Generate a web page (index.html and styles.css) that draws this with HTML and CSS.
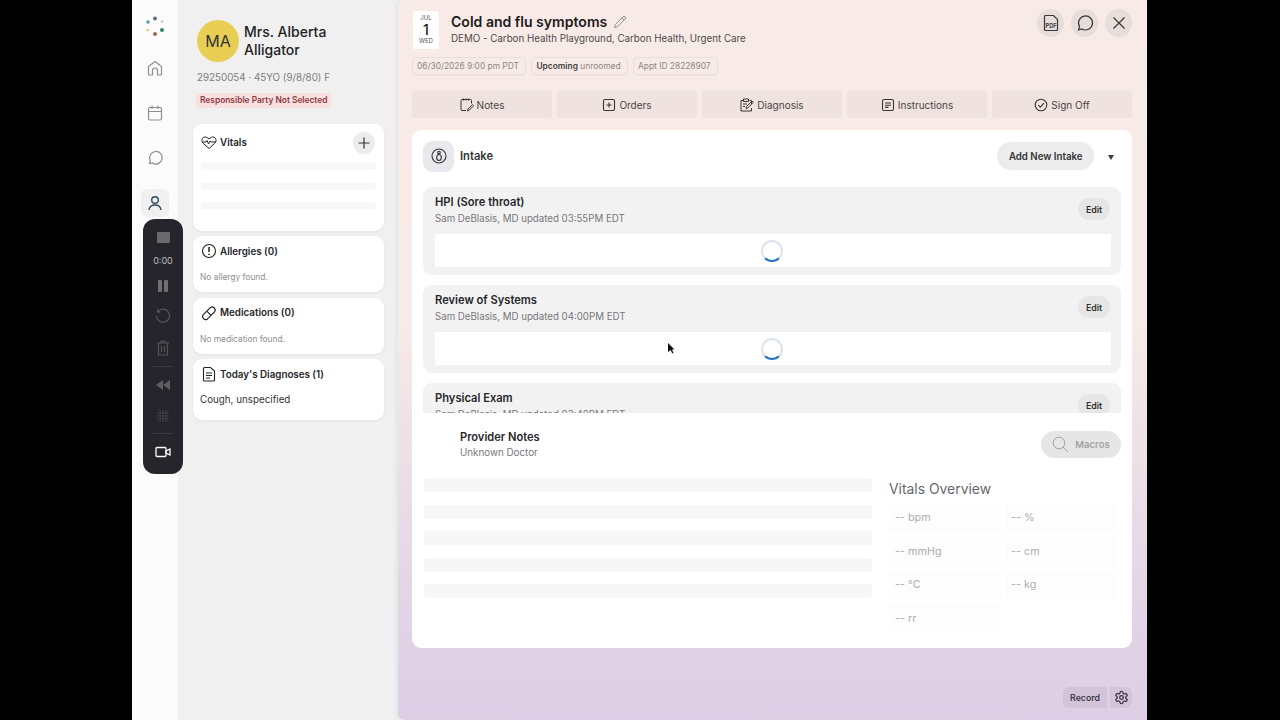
FILE: index.html
```html
<!DOCTYPE html>
<html lang="en">
<head>
    <meta charset="UTF-8">
    <title>Cold and flu symptoms</title>
    <link rel="stylesheet" href="styles.css">
</head>
<body>
<div class="app">
    <!-- left rail -->
    <nav class="rail">
        <svg class="logo" width="22" height="22" viewBox="0 0 22 22">
            <circle cx="11" cy="2.5" r="2" fill="#5d7186"/>
            <circle cx="18" cy="5.5" r="1.3" fill="#a9cfd0"/>
            <circle cx="4" cy="6" r="1.7" fill="#4f9a94"/>
            <circle cx="3.5" cy="14" r="1.3" fill="#e9cf62"/>
            <circle cx="18" cy="14" r="2" fill="#2f8177"/>
            <circle cx="11" cy="18" r="2" fill="#a5693f"/>
        </svg>
        <a class="rail-item">
            <svg width="18" height="18" viewBox="0 0 18 18" fill="none" stroke="#8b8f93" stroke-width="1.2"><path d="M2.5 7.5 9 2.5l6.5 5V15a1 1 0 0 1-1 1H11.5v-4.5a2.5 2.5 0 0 0-5 0V16H3.5a1 1 0 0 1-1-1z"/></svg>
        </a>
        <a class="rail-item">
            <svg width="18" height="18" viewBox="0 0 18 18" fill="none" stroke="#8b8f93" stroke-width="1.2"><rect x="2.5" y="3.5" width="13" height="12.5" rx="1.5"/><path d="M2.5 7.5h13M6 1.5v3.5M12 1.5v3.5"/></svg>
        </a>
        <a class="rail-item">
            <svg width="18" height="18" viewBox="0 0 18 18" fill="none" stroke="#8b8f93" stroke-width="1.2"><path d="M3.5 15.500l.8-3A6.3 6.3 0 1 1 6.500 15z" transform="translate(0 -1)"/></svg>
        </a>
        <a class="rail-item active">
            <svg width="18" height="18" viewBox="0 0 18 18" fill="none" stroke="#2d4a5e" stroke-width="1.4"><circle cx="9" cy="6" r="3.3"/><path d="M3 16c.4-3.4 2.8-5 6-5s5.600 1.600 6 5"/></svg>
        </a>
    </nav>

    <!-- recorder overlay -->
    <div class="recorder">
        <span class="rec-stop"></span>
        <span class="rec-time">0:00</span>
        <svg width="14" height="14" viewBox="0 0 14 14" fill="#6f7073"><rect x="2" y="1" width="4" height="12" rx="1"/><rect x="8" y="1" width="4" height="12" rx="1"/></svg>
        <svg width="16" height="16" viewBox="0 0 16 16" fill="none" stroke="#55565a" stroke-width="1.2"><path d="M3 3.500A6.500 6.500 0 1 1 1.500 8M2.500 1.500v2.500H5"/></svg>
        <svg width="14" height="16" viewBox="0 0 14 16" fill="none" stroke="#55565a" stroke-width="1.2"><path d="M1 3h12M5 3V1h4v2M2.500 3v12h9V3M5.500 6v6M8.500 6v6"/></svg>
        <span class="rec-line"></span>
        <svg class="rec-rewind" width="14" height="10" viewBox="0 0 14 10" fill="#5f6064"><path d="M7 0v10L0 5zM14 0v10L7 5z"/></svg>
        <svg width="14" height="14" viewBox="0 0 14 14" fill="none" stroke="#4f5054" stroke-width="1" stroke-dasharray="1.500 1"><path d="M1 4h12M1 7h12M1 10h12M4 1v12M7 1v12M10 1v12"/></svg>
        <span class="rec-line"></span>
        <svg width="16" height="12" viewBox="0 0 16 12" fill="none" stroke="#fff" stroke-width="1.300"><rect x="1" y="1.500" width="10" height="9" rx="1"/><path d="M11 5l4-2v6l-4-2z"/></svg>
    </div>

    <!-- patient column -->
    <aside class="side">
        <div class="patient">
            <div class="avatar">MA</div>
            <div class="patient-name">Mrs. Alberta Alligator</div>
        </div>
        <div class="patient-meta">29250054 · 45YO (9/8/80) F</div>
        <div class="alert">Responsible Party Not Selected</div>

        <section class="panel vitals-panel">
            <div class="panel-head">
                <svg width="16" height="16" viewBox="0 0 16 16" fill="none" stroke="#222" stroke-width="1"><path d="M2.500 9.500C1 8 .8 6.800 1 5.500 1.400 3.500 3.800 2.300 5.500 3.300 6.500 3.800 7.500 4.500 8 5c.5-.5 1.500-1.200 2.500-1.700 1.700-1 4.100.2 4.500 2.200.2 1.300 0 2.500-1.500 4L8 14.500z"/><path d="M1 8h4l1-1.500L7.500 10 9 7l1 1h5"/></svg>
                <h3>Vitals</h3>
                <button class="round-add">
                    <svg width="12" height="12" viewBox="0 0 12 12" stroke="#333" stroke-width="1.200"><path d="M6 .5v11M.5 6h11"/></svg>
                </button>
            </div>
            <div class="skeleton side-bar"></div>
            <div class="skeleton side-bar"></div>
            <div class="skeleton side-bar"></div>
        </section>

        <section class="panel">
            <div class="panel-head">
                <svg width="16" height="16" viewBox="0 0 16 16" fill="none" stroke="#222" stroke-width="1.100"><circle cx="8" cy="8" r="6.500"/><path d="M8 4v5M8 10.800v1.200" stroke-width="1.500"/></svg>
                <h3>Allergies (0)</h3>
            </div>
            <p class="muted">No allergy found.</p>
        </section>

        <section class="panel">
            <div class="panel-head">
                <svg width="16" height="16" viewBox="0 0 16 16" fill="none" stroke="#222" stroke-width="1.200"><path d="M2.300 9.700l7-7a3 3 0 0 1 4.200 4.200l-7 7a3 3 0 0 1-4.200-4.200zM5.800 6.200l4.200 4.200"/></svg>
                <h3>Medications (0)</h3>
            </div>
            <p class="muted">No medication found.</p>
        </section>

        <section class="panel">
            <div class="panel-head">
                <svg width="16" height="16" viewBox="0 0 16 16" fill="none" stroke="#222" stroke-width="1.100"><path d="M2.500 2.500a1 1 0 0 1 1-1h6l4 3.500v9a1 1 0 0 1-1 1h-9a1 1 0 0 1-1-1zM5 7h6M5 9.500h6M5 12h4"/></svg>
                <h3>Today's Diagnoses (1)</h3>
            </div>
            <p class="diagnosis">Cough, unspecified</p>
        </section>
    </aside>

    <!-- main visit area -->
    <main class="visit">
        <header class="visit-head">
            <div class="date-tile">
                <span class="date-month">JUL</span>
                <span class="date-day">1</span>
                <span class="date-week">WED</span>
            </div>
            <div class="visit-title">
                <h1>Cold and flu symptoms
                    <svg width="14" height="14" viewBox="0 0 14 14" fill="none" stroke="#8d8a88" stroke-width="1"><path d="M1.500 12.500l.8-3L10 1.800a1.400 1.400 0 0 1 2.200 2.200L4.500 11.700zM9 3l2 2"/></svg>
                </h1>
                <p>DEMO - Carbon Health Playground, Carbon Health, Urgent Care</p>
            </div>
            <div class="head-actions">
                <button class="round-btn">
                    <svg width="16" height="18" viewBox="0 0 16 18" fill="none" stroke="#3a3635" stroke-width="1.200"><path d="M1.500 2.500a1 1 0 0 1 1-1h8l4 4v10a1 1 0 0 1-1 1h-11a1 1 0 0 1-1-1z"/><text x="8" y="13.500" text-anchor="middle" class="pdf-label">PDF</text></svg>
                </button>
                <button class="round-btn">
                    <svg width="18" height="18" viewBox="0 0 18 18" fill="none" stroke="#3a3635" stroke-width="1.200"><path d="M2.500 16l1-3.500A7 7 0 1 1 6 15z"/></svg>
                </button>
                <button class="round-btn">
                    <svg width="14" height="14" viewBox="0 0 14 14" stroke="#3a3635" stroke-width="1.200"><path d="M1.500 1.500l11 11M12.500 1.500l-11 11"/></svg>
                </button>
            </div>
        </header>

        <div class="chips">
            <span class="chip">06/30/2026 9:00 pm PDT</span>
            <span class="chip"><b>Upcoming</b> unroomed</span>
            <span class="chip">Appt ID 28228907</span>
        </div>

        <div class="tabs">
            <a class="tab">
                <svg width="14" height="14" viewBox="0 0 14 14" fill="none" stroke="#3a3635" stroke-width="1"><path d="M6 12.500H2a1 1 0 0 1-1-1v-9a1 1 0 0 1 1-1h8.500a1 1 0 0 1 1 1v3M3.500.5v2M6 .5v2M8.500.5v2M7.500 13l.5-2 4.500-4.500 1.200 1.200L9.200 12.200z"/></svg>
                Notes
            </a>
            <a class="tab">
                <svg width="14" height="14" viewBox="0 0 14 14" fill="none" stroke="#3a3635" stroke-width="1.100"><rect x="1.500" y="1.500" width="11" height="11" rx="1.500"/><path d="M7 4.500v5M4.500 7h5"/></svg>
                Orders
            </a>
            <a class="tab">
                <svg width="14" height="14" viewBox="0 0 14 14" fill="none" stroke="#3a3635" stroke-width="1"><path d="M11.500 6V2.500h-2M3 2.500H1v10.500h10.500V10M3.500 1h5v2.500h-5zM3 6h4M3 8.500h2M6 10.500l.5-2L12 3l1.300 1.300L7.800 10z"/></svg>
                Diagnosis
            </a>
            <a class="tab">
                <svg width="14" height="14" viewBox="0 0 14 14" fill="none" stroke="#3a3635" stroke-width="1.100"><rect x="1.500" y="1.500" width="11" height="11" rx="1.500"/><path d="M4 5h6M4 7.200h6M4 9.400h3.500"/></svg>
                Instructions
            </a>
            <a class="tab">
                <svg width="14" height="14" viewBox="0 0 14 14" fill="none" stroke="#3a3635" stroke-width="1.100"><circle cx="7" cy="7" r="5.800"/><path d="M4.300 7.200l2 2 3.600-4"/></svg>
                Sign Off
            </a>
        </div>

        <section class="sheet">
            <div class="intake-head">
                <span class="intake-icon">
                    <svg width="16" height="16" viewBox="0 0 16 16" fill="none" stroke="#333" stroke-width="1.100"><circle cx="8" cy="8" r="7"/><circle cx="8" cy="4.600" r="1.300"/><path d="M8 6.500c-1.600 0-2.300 1.200-2.300 3 0 1.700 1 3 2.300 3s2.300-1.300 2.300-3c0-1.800-.7-3-2.300-3z"/></svg>
                </span>
                <h2>Intake</h2>
                <button class="pill-btn">Add New Intake</button>
                <span class="caret"></span>
            </div>

            <div class="intake-list">
                <article class="note">
                    <div class="note-head">
                        <div>
                            <h4>HPI (Sore throat)</h4>
                            <p>Sam DeBlasis, MD updated 03:55PM EDT</p>
                        </div>
                        <button class="edit-btn">Edit</button>
                    </div>
                    <div class="note-body"><span class="spinner"></span></div>
                </article>
                <article class="note">
                    <div class="note-head">
                        <div>
                            <h4>Review of Systems</h4>
                            <p>Sam DeBlasis, MD updated 04:00PM EDT</p>
                        </div>
                        <button class="edit-btn">Edit</button>
                    </div>
                    <div class="note-body"><span class="spinner"></span></div>
                </article>
                <article class="note">
                    <div class="note-head">
                        <div>
                            <h4>Physical Exam</h4>
                            <p>Sam DeBlasis, MD updated 03:40PM EDT</p>
                        </div>
                        <button class="edit-btn">Edit</button>
                    </div>
                </article>
            </div>

            <div class="provider">
                <div class="provider-head">
                    <div>
                        <h2>Provider Notes</h2>
                        <p>Unknown Doctor</p>
                    </div>
                    <button class="macros">
                        <svg width="17" height="17" viewBox="0 0 17 17" fill="none" stroke="#a3a3a3" stroke-width="1"><circle cx="7" cy="7" r="5.800"/><path d="M11.200 11.200l4.800 4.800"/></svg>
                        Macros
                    </button>
                </div>
                <div class="provider-body">
                    <div class="note-lines">
                        <div class="skeleton line"></div>
                        <div class="skeleton line"></div>
                        <div class="skeleton line"></div>
                        <div class="skeleton line"></div>
                        <div class="skeleton line"></div>
                    </div>
                    <div class="overview">
                        <h3>Vitals Overview</h3>
                        <div class="overview-grid">
                            <span>-- bpm</span><span>-- %</span>
                            <span>-- mmHg</span><span>-- cm</span>
                            <span>-- °C</span><span>-- kg</span>
                            <span>-- rr</span>
                        </div>
                    </div>
                </div>
            </div>
        </section>

        <div class="record-bar">
            <button class="record-btn">Record</button>
            <button class="gear-btn">
                <svg width="15" height="15" viewBox="0 0 24 24" fill="none" stroke="#2e2a35" stroke-width="1.800"><circle cx="12" cy="12" r="3"/><path d="M12.220 2h-.44a2 2 0 0 0-2 2v.18a2 2 0 0 1-1 1.730l-.43.25a2 2 0 0 1-2 0l-.15-.08a2 2 0 0 0-2.730.73l-.22.38a2 2 0 0 0 .73 2.730l.15.1a2 2 0 0 1 1 1.720v.51a2 2 0 0 1-1 1.740l-.15.09a2 2 0 0 0-.73 2.730l.22.38a2 2 0 0 0 2.730.73l.15-.08a2 2 0 0 1 2 0l.43.25a2 2 0 0 1 1 1.730V20a2 2 0 0 0 2 2h.44a2 2 0 0 0 2-2v-.18a2 2 0 0 1 1-1.730l.43-.25a2 2 0 0 1 2 0l.15.08a2 2 0 0 0 2.730-.73l.22-.39a2 2 0 0 0-.73-2.730l-.15-.08a2 2 0 0 1-1-1.740v-.5a2 2 0 0 1 1-1.740l.15-.09a2 2 0 0 0 .73-2.730l-.22-.38a2 2 0 0 0-2.730-.73l-.15.08a2 2 0 0 1-2 0l-.43-.25a2 2 0 0 1-1-1.730V4a2 2 0 0 0-2-2z"/></svg>
            </button>
        </div>

        <svg class="cursor" width="7" height="11" viewBox="0 0 7 11" fill="#111"><path d="M0 0l6.500 6.500H4l1.500 3.500-1.300.6L2.700 7 0 9z"/></svg>
    </main>
</div>
</body>
</html>
```

FILE: styles.css
```css
/* page */
* {
    box-sizing: border-box;
}

body {
    margin: 0;
    height: 720px;
    overflow: hidden;
    background-color: #000;
    font-family: 'Inter', 'Liberation Sans', sans-serif;
    color: #222;
}

h1, h2, h3, h4, p {
    margin: 0;
}

button {
    font-family: inherit;
    border: none;
}

.app {
    position: relative;
    display: flex;
    width: 1015px;
    height: 720px;
    margin-left: 132px;
    background-color: #f0f0f1;
}

/* left rail */
.rail {
    width: 46px;
    background-color: #fbfbfb;
    display: flex;
    flex-direction: column;
    align-items: center;
    padding-top: 16px;
}

.logo {
    margin-bottom: 16px;
}

.rail-item {
    width: 28px;
    height: 28px;
    margin-bottom: 17px;
    display: flex;
    align-items: center;
    justify-content: center;
    border-radius: 6px;
}

.rail-item.active {
    background-color: #f0f0f1;
}

/* recorder */
.recorder {
    position: absolute;
    left: 11px;
    top: 219px;
    width: 40px;
    height: 255px;
    border-radius: 12px;
    background-color: #25252b;
    display: flex;
    flex-direction: column;
    align-items: center;
    padding-top: 13px;
}

.rec-stop {
    width: 13px;
    height: 13px;
    border-radius: 1px;
    background-color: #6a6a6e;
    margin-bottom: 12px;
}

.rec-time {
    font-size: 9px;
    line-height: 11px;
    color: #bdbdc0;
    margin-bottom: 13px;
}

.recorder svg {
    flex-shrink: 0;
    margin-bottom: 15.500px;
}

.recorder .rec-rewind {
    margin-bottom: 19px;
}

.rec-line {
    width: 20px;
    height: 1px;
    background-color: #3b3b40;
    margin-top: -5.500px;
    margin-bottom: 13px;
}

/* patient column */
.side {
    width: 220px;
    background-color: #f0f0f1;
    padding: 20px 14px 0 14px;
}

.patient {
    display: flex;
    align-items: center;
    gap: 5px;
    padding-left: 5px;
}

.avatar {
    width: 42px;
    height: 42px;
    border-radius: 50%;
    background-color: #e9ce54;
    color: #333;
    font-size: 16px;
    line-height: 42px;
    text-align: center;
    flex-shrink: 0;
}

.patient-name {
    font-size: 14px;
    line-height: 18.500px;
    font-weight: 500;
    width: 110px;
    color: #222;
}

.patient-meta {
    font-size: 9.800px;
    color: #7c7c7e;
    margin: 10px 0 0 5px;
    line-height: 12px;
}

.alert {
    display: inline-block;
    margin: 9px 0 0 4px;
    padding: 0 4px;
    height: 15px;
    line-height: 15px;
    font-size: 8.400px;
    font-weight: 600;
    color: #8d3b42;
    background-color: #f8dfe0;
    border-radius: 3px;
    white-space: nowrap;
}

.panel {
    background-color: #fff;
    border-radius: 9px;
    box-shadow: 0 1px 3px rgba(0, 0, 0, 0.06);
    padding: 5px 8px 9px 8px;
    margin: 5.500px 0 0 1px;
    width: 191px;
}

.vitals-panel {
    margin-top: 16px;
    padding-top: 8px;
    height: 106.500px;
}

.panel-head {
    display: flex;
    align-items: center;
    gap: 3px;
    height: 20px;
}

.panel-head svg {
    flex-shrink: 0;
}

.panel-head h3 {
    font-size: 9.800px;
    font-weight: 600;
    color: #26262a;
}

.round-add {
    margin: 2px 1px 0 auto;
    width: 22px;
    height: 22px;
    border-radius: 50%;
    background-color: #ececec;
    padding: 0;
    display: flex;
    align-items: center;
    justify-content: center;
}

.muted {
    font-size: 8.400px;
    color: #8e8e90;
    margin: 10px 0 0 -1px;
    line-height: 12px;
}

.diagnosis {
    font-size: 9.800px;
    color: #333;
    margin: 9px 0 0 -1px;
    line-height: 14px;
    padding-bottom: 4px;
}

.skeleton {
    background-color: #f7f7f7;
    border-radius: 2px;
}

.side-bar {
    height: 7px;
    margin-top: 12.500px;
}

.panel-head + .side-bar {
    margin-top: 11px;
}

/* main visit area */
.visit {
    position: relative;
    width: 749px;
    background: linear-gradient(180deg, #f8ebe7 0%, #f7ebe7 45%, #e2d3e6 85%, #dfcfe6 100%);
    padding: 11px 15px 0 14px;
    border-radius: 6px 0 0 6px;
    box-shadow: -2px 0 4px rgba(0, 0, 0, 0.05);
}

.visit-head {
    display: flex;
    align-items: flex-start;
    height: 37px;
}

.date-tile {
    width: 26px;
    height: 38px;
    margin-left: 1px;
    background-color: #fff;
    border-radius: 2px;
    display: flex;
    flex-direction: column;
    align-items: center;
    padding-top: 3px;
}

.date-month,
.date-week {
    font-size: 6px;
    line-height: 8px;
    color: #555;
}

.date-day {
    font-size: 14px;
    line-height: 15px;
    font-weight: 500;
    color: #222;
}

.visit-title {
    margin-left: 12px;
    padding-top: 2px;
}

.visit-title h1 {
    font-size: 14.050px;
    line-height: 17px;
    font-weight: 600;
    color: #1d1b1b;
    white-space: nowrap;
}

.visit-title h1 svg {
    vertical-align: -2px;
    margin-left: 2px;
}

.visit-title p {
    font-size: 9.770px;
    line-height: 14px;
    margin-top: 2px;
    color: #4d4a4a;
    white-space: nowrap;
}

.head-actions {
    margin-left: auto;
    display: flex;
    gap: 7px;
    margin-top: -2px;
}

.round-btn {
    width: 27px;
    height: 28px;
    border-radius: 50%;
    background-color: #e7dedb;
    padding: 0;
    display: flex;
    align-items: center;
    justify-content: center;
}

.pdf-label {
    font-family: 'Inter', 'Liberation Sans', sans-serif;
    font-size: 5.500px;
    font-weight: 700;
    fill: #3a3635;
    stroke: none;
}

.chips {
    display: flex;
    gap: 5.500px;
    margin-top: 9px;
}

.chip {
    height: 18px;
    line-height: 16px;
    padding: 0 6px 0 4px;
    border: 1px solid #eadfdb;
    border-radius: 4px;
    font-size: 8.400px;
    color: #8c8785;
    white-space: nowrap;
    box-shadow: 0 1px 1px rgba(0, 0, 0, 0.03);
}

.chip b {
    font-weight: 600;
    color: #444;
}

.tabs {
    display: grid;
    grid-template-columns: repeat(5, 1fr);
    gap: 5px;
    margin-top: 16px;
}

.tab {
    height: 27px;
    background-color: #efe2df;
    border-radius: 2px;
    display: flex;
    align-items: center;
    justify-content: center;
    gap: 3px;
    font-size: 10px;
    color: #4a4645;
}

/* white sheet */
.sheet {
    margin-top: 12px;
    height: 518px;
    background-color: #fff;
    border-radius: 9px;
    overflow: hidden;
    position: relative;
}

.intake-head {
    display: flex;
    align-items: center;
    height: 57px;
    padding: 0 11px 5px 11px;
}

.intake-icon {
    width: 31px;
    height: 31px;
    border-radius: 9px;
    background-color: #e9e9ed;
    display: flex;
    align-items: center;
    justify-content: center;
    margin-right: 6px;
}

.intake-head h2 {
    font-size: 11.200px;
    font-weight: 600;
    color: #333;
}

.pill-btn {
    margin-left: auto;
    height: 28px;
    padding: 0 11.500px;
    border-radius: 14px;
    background-color: #ececec;
    font-size: 9.700px;
    font-weight: 600;
    color: #333;
}

.caret {
    width: 0;
    height: 0;
    margin: 2px 7px 0 14px;
    border-left: 3.500px solid transparent;
    border-right: 3.500px solid transparent;
    border-top: 5px solid #3d3d40;
}

.intake-list {
    height: 226px;
    overflow: hidden;
    padding: 0 11px;
}

.note {
    background-color: #f2f2f3;
    border-radius: 9px;
    height: 88px;
    padding: 8px 10px 8px 12px;
    margin-bottom: 10px;
}

.note-head {
    display: flex;
    justify-content: space-between;
    align-items: center;
    height: 31px;
}

.note h4 {
    font-size: 11.150px;
    line-height: 15px;
    font-weight: 600;
    color: #26262a;
}

.note p {
    font-size: 9.700px;
    line-height: 14px;
    margin-top: 2px;
    color: #77777a;
    white-space: nowrap;
}

.edit-btn {
    width: 32px;
    height: 22px;
    margin: -3px 1px 0 0;
    padding: 0;
    border-radius: 11px;
    background-color: #e6e6e7;
    font-size: 8.800px;
    font-weight: 600;
    color: #333;
}

.note-body {
    height: 33px;
    margin: 8px 0 0 0;
    background-color: #fff;
    display: flex;
    align-items: center;
    justify-content: center;
}

.spinner {
    width: 22px;
    height: 22px;
    margin-right: 2px;
    border-radius: 50%;
    border: 2px solid #dbe3ee;
    border-bottom-color: #2a73c4;
}

/* provider notes */
.provider {
    background-color: #fff;
}

.provider-head {
    display: flex;
    justify-content: space-between;
    padding: 17px 11px 0 48px;
}

.provider-head h2 {
    font-size: 11.100px;
    line-height: 15px;
    font-weight: 600;
    color: #26262a;
}

.provider-head p {
    font-size: 9.800px;
    line-height: 14px;
    margin-top: 1px;
    color: #77777a;
}

.macros {
    width: 80px;
    height: 27px;
    margin-top: 1px;
    border-radius: 14px;
    background-color: #e6e6e6;
    color: #a3a3a3;
    font-size: 9.500px;
    font-weight: 600;
    display: flex;
    align-items: center;
    justify-content: center;
    gap: 6px;
    padding: 0;
}

.provider-body {
    display: flex;
    padding: 0 11px;
    margin-top: 17px;
}

.note-lines {
    width: 449px;
    padding-top: 1px;
    padding-left: 1px;
}

.line {
    height: 14px;
    margin-bottom: 12.500px;
}

.overview {
    margin-left: 17px;
    flex: 1;
    padding-right: 4px;
}

.overview h3 {
    font-size: 13.900px;
    line-height: 18px;
    font-weight: 400;
    color: #68686b;
    margin-top: 3px;
}

.overview-grid {
    display: grid;
    grid-template-columns: 1fr 1fr;
    gap: 5.700px 4px;
    margin-top: 6px;
}

.overview-grid span {
    height: 28px;
    line-height: 28px;
    padding-left: 6px;
    font-size: 10.800px;
    color: #aeaeb0;
    background-color: #fdfdfd;
}

/* bottom right */
.record-bar {
    position: absolute;
    right: 15px;
    bottom: 12px;
    display: flex;
    gap: 3px;
}

.record-btn {
    width: 44px;
    height: 21px;
    padding: 0;
    background-color: #d3c4d9;
    border-radius: 6px 0 0 6px;
    font-size: 8.800px;
    font-weight: 500;
    color: #2e2a35;
}

.gear-btn {
    width: 22px;
    height: 21px;
    padding: 0;
    background-color: #d3c4d9;
    border-radius: 0 6px 6px 0;
    display: flex;
    align-items: center;
    justify-content: center;
}

.cursor {
    position: absolute;
    left: 270px;
    top: 343px;
}
```
